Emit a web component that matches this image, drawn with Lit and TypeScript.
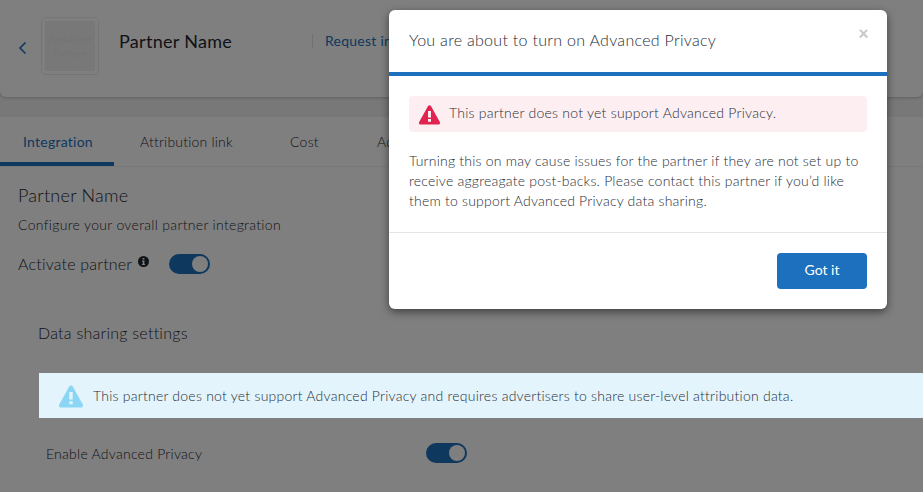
import { LitElement, html, css } from "lit";
import { customElement } from "lit/decorators.js";

const warn = (fill: string, size: number) => html`<svg class="warn" width=${size} height=${size} viewBox="0 0 24 24"><path fill=${fill} fill-rule="evenodd" d="M12 1.500c.8 0 1.400.4 1.800 1.100l10 18c.7 1.300-.2 2.900-1.700 2.900H1.900c-1.500 0-2.400-1.600-1.700-2.900l10-18c.4-.7 1-1.100 1.800-1.100zM10.300 8v7.500h3.400V8zM10.300 17.200v3h3.400v-3z"/></svg>`;

@customElement("app-root")
export class AppRoot extends LitElement {
  static styles = css`
    :host { display: block; width: 923px; height: 492px; overflow: hidden; position: relative; background: #f0f0f0; font-family: "Lato", sans-serif; font-weight: 300; letter-spacing: .25px; color: #1f2730; font-size: 14px; }
    .overlay { position: absolute; inset: 0; background: rgba(0,0,0,.5); z-index: 1; }
    .head { height: 97px; background: #fff; border-radius: 0 0 6px 6px; box-shadow: 0 1px 3px rgba(0,0,0,.2); display: flex; align-items: flex-start; box-sizing: border-box; padding: 17px 0 0 18px; }
    .chev { margin: 24px 0 0 0; width: 9px; height: 14px; flex: none; }
    .logo { margin-left: 14px; width: 58px; height: 58px; box-sizing: border-box; border: 1px solid #ebebeb; border-radius: 5px; padding: 3px; flex: none; }
    .logo span { display: block; height: 50px; box-sizing: border-box; background: #f1f1f1; text-align: center; color: #e8e8e8; font-size: 10px; line-height: 14px; padding-top: 11px; font-weight: 400; letter-spacing: 0; }
    .pname { margin: 13px 0 0 20px; font-size: 18px; line-height: 22px; font-weight: 400; letter-spacing: .3px; width: 193px; flex: none; }
    .req { margin-top: 17px; border-left: 1px solid #e2e2e2; padding-left: 12px; color: #1c70bd; line-height: 14px; white-space: nowrap; font-weight: 400; }
    .tabs { margin-top: 20px; height: 49px; background: #fff; display: flex; }
    .tab { height: 49px; box-sizing: border-box; padding-top: 16px; line-height: 18px; white-space: nowrap; }
    .tab.on { width: 114px; padding-left: 23px; color: #1c70bd; border-bottom: 4px solid #1c70bd; font-weight: 400; }
    .t2 { margin-left: 26px; width: 150px; letter-spacing: .2px; }
    .t3 { width: 87px; }
    .body { background: #fff; height: 330px; padding: 17px 0 0 0; box-sizing: border-box; margin-top: 1px;}
    .h2 { margin-left: 18px; font-size: 18px; line-height: 22px; }
    .sub { margin: 10px 0 0 18px; font-size: 14px; line-height: 18px; letter-spacing: .32px; }
    .act { margin: 18px 0 0 18px; display: flex; align-items: center; font-size: 16px; line-height: 24px; letter-spacing: .2px; }
    .info { margin: -6px 0 0 6px; width: 11px; height: 11px; }
    .sw { width: 41px; height: 20px; border-radius: 10px; background: #1c70bd; box-sizing: border-box; padding: 2px; display: flex; justify-content: flex-end; flex: none; }
    .sw i { display: block; width: 16px; height: 16px; border-radius: 50%; background: #fff; }
    .act .sw { margin-left: 20px; }
    .h3 { margin: 46px 0 0 38px; font-size: 16px; line-height: 22px; }
    .banner { position: relative; z-index: 2; margin: 29px 0 0 39px; height: 45px; background: #e3f4fc; display: flex; align-items: center; padding-left: 20px; gap: 10px; white-space: nowrap; color: #262e38; letter-spacing: .24px; }
    .enable { margin: 25px 0 0 46px; display: flex; align-items: center; }
    .enable span { width: 380px; }
    .modal { position: absolute; z-index: 3; left: 389px; top: 10px; width: 498px; height: 299px; background: #fff; border-radius: 6px; box-shadow: 0 3px 9px rgba(0,0,0,.5); display: flex; flex-direction: column; color: #262e38; }
    .mh { height: 43px; border-bottom: 4px solid #1c70bd; position: relative; padding: 19px 20px 0; }
    .mh h1 { margin: 0; font-weight: 300; font-size: 16px; line-height: 22px; letter-spacing: .3px; }
    .x { position: absolute; right: 18px; top: 13px; color: #c9c9c9; font-size: 18px; font-weight: 900; line-height: 20px; }
    .alert { margin: 20px 20px 0; height: 36px; background: #fdeef1; border-radius: 4px; display: flex; align-items: center; padding: 0 0 0 10px; gap: 9px; }
    .alert span { margin-bottom: 4px; }
    .p { margin: 19px 20px 0; line-height: 20px; height: 60px; letter-spacing: .22px; }
    .foot { margin-top: 21px; border-top: 1px solid #e5e5e5; padding: 20px 20px 0; display: flex; justify-content: flex-end; }
    button { width: 90px; height: 36px; background: #1c70bd; color: #fff; border: 0; border-radius: 4px; font: 400 14px "Lato", sans-serif; padding: 0 0 3px; }
  `;

  render() {
    return html`
      <div class="head">
        <svg class="chev" viewBox="0 0 9 14"><path d="M7.500 1.500 2 7l5.500 5.500" fill="none" stroke="#1c70bd" stroke-width="1.600"/></svg>
        <div class="logo"><span>AppsFlyer Partner</span></div>
        <div class="pname">Partner Name</div>
        <div class="req">Request integration</div>
      </div>
      <div class="tabs">
        <div class="tab on">Integration</div>
        <div class="tab t2">Attribution link</div>
        <div class="tab t3">Cost</div>
        <div class="tab">Ad revenue</div>
      </div>
      <div class="body">
        <div class="h2">Partner Name</div>
        <div class="sub">Configure your overall partner integration</div>
        <div class="act">Activate partner
          <svg class="info" viewBox="0 0 11 11"><circle cx="5.500" cy="5.500" r="5.500" fill="#1f2730"/><path d="M4.600 2h1.800v1.600H4.600zM4 4.500h2.400v3.500h.7v1H3.900V8h.8V5.500H4z" fill="#fff"/></svg>
          <div class="sw"><i></i></div></div>
        <div class="h3">Data sharing settings</div>
        <div class="banner">${warn("#8cd6f5", 24)}<span>This partner does not yet support Advanced Privacy and requires advertisers to share user-level attribution data.</span></div>
        <div class="enable"><span>Enable Advanced Privacy</span><div class="sw"><i></i></div></div>
      </div>
      <div class="overlay"></div>
      <div class="modal">
        <div class="mh"><h1>You are about to turn on Advanced Privacy</h1><span class="x">×</span></div>
        <div class="alert">${warn("#e0244f", 21)}<span>This partner does not yet support Advanced Privacy.</span></div>
        <div class="p">Turning this on may cause issues for the partner if they are not set up to receive aggreagate post-backs. Please contact this partner if you’d like them to support Advanced Privacy data sharing.</div>
        <div class="foot"><button>Got it</button></div>
      </div>
    `;
  }
}
